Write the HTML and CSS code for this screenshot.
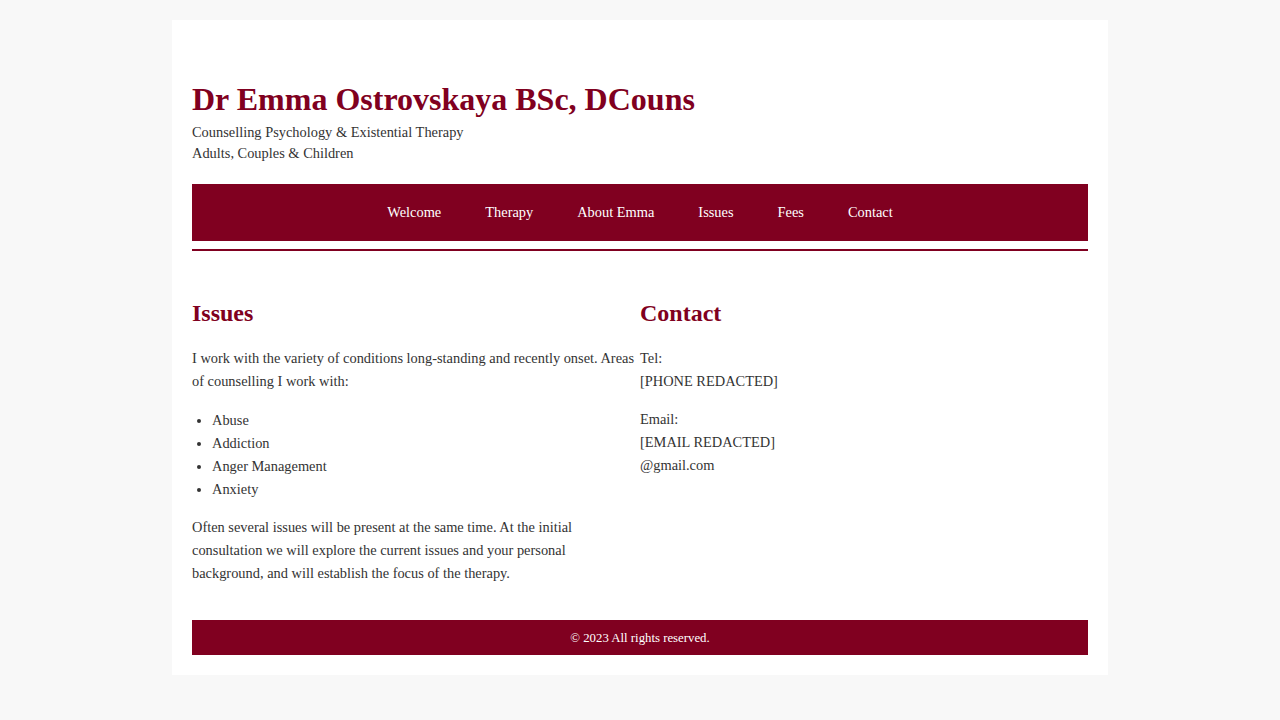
FILE: index.html
```html
<!DOCTYPE html>
<html lang="en">
<head>
<meta charset="utf-8">
<title>Dr Emma Ostrovskaya BSc, DCouns</title>
<link rel="stylesheet" href="styles.css">
</head>
<body>
<div class="page">
  <header class="site-header">
    <h1 class="site-title">Dr Emma Ostrovskaya BSc, DCouns</h1>
    <p class="tagline">Counselling Psychology &amp; Existential Therapy<br>Adults, Couples &amp; Children</p>
    <nav class="main-nav">
      <a href="#">Welcome</a>
      <a href="#">Therapy</a>
      <a href="#">About Emma</a>
      <a href="#">Issues</a>
      <a href="#">Fees</a>
      <a href="#">Contact</a>
    </nav>
  </header>
  <main class="content">
    <section class="col">
      <h2>Issues</h2>
      <p>I work with the variety of conditions long-standing and recently onset. Areas of counselling I work with:</p>
      <ul class="issue-list">
        <li>Abuse</li>
        <li>Addiction</li>
        <li>Anger Management</li>
        <li>Anxiety</li>
      </ul>
      <p>Often several issues will be present at the same time. At the initial consultation we will explore the current issues and your personal background, and will establish the focus of the therapy.</p>
    </section>
    <section class="col contact-col">
      <h2>Contact</h2>
      <p>Tel:<br>[PHONE REDACTED]</p>
      <p>Email:<br>[EMAIL REDACTED]<br>@gmail.com</p>
    </section>
  </main>
  <footer class="site-footer">© 2023 All rights reserved.</footer>
</div>
</body>
</html>
```
FILE: styles.css
```css
html, body {
  margin: 0;
  padding: 0;
}
body {
  background: #f8f8f8;
  font-family: "Liberation Serif", "Times New Roman", serif;
  color: #333333;
  padding-top: 20px;
}
.page {
  width: 936px;
  margin: 0 auto;
  background: #ffffff;
  padding: 20px;
  box-sizing: border-box;
}
.site-header {
  padding-top: 41px;
  padding-bottom: 8px;
  border-bottom: 2px solid #800020;
}
.site-title {
  margin: 0 0 4px;
  font-size: 32px;
  line-height: 37px;
  font-weight: bold;
  color: #800020;
}
.tagline {
  margin: 0;
  font-size: 14.4px;
  line-height: 21px;
}
.main-nav {
  margin-top: 20px;
  background: #800020;
  padding: 20px 0;
  display: flex;
  justify-content: center;
}
.main-nav a {
  color: #ffffff;
  text-decoration: none;
  font-size: 14.4px;
  line-height: 17px;
  padding: 0 22px;
}
.content {
  display: grid;
  grid-template-columns: 1fr 1fr;
  padding: 28px 0 19px;
}
.col h2 {
  margin: 20px 0;
  font-size: 24px;
  line-height: 28px;
  color: #800020;
}
.col p {
  margin: 0 0 16px;
  font-size: 14.4px;
  line-height: 23px;
}
.contact-col p {
  margin-bottom: 15px;
}
.issue-list {
  margin: 0 0 15px;
  padding-left: 20px;
  font-size: 14.4px;
  line-height: 23px;
}
.site-footer {
  background: #800020;
  color: #ffffff;
  text-align: center;
  font-size: 12.8px;
  line-height: 15px;
  padding: 11px 10px 9px;
}
```
